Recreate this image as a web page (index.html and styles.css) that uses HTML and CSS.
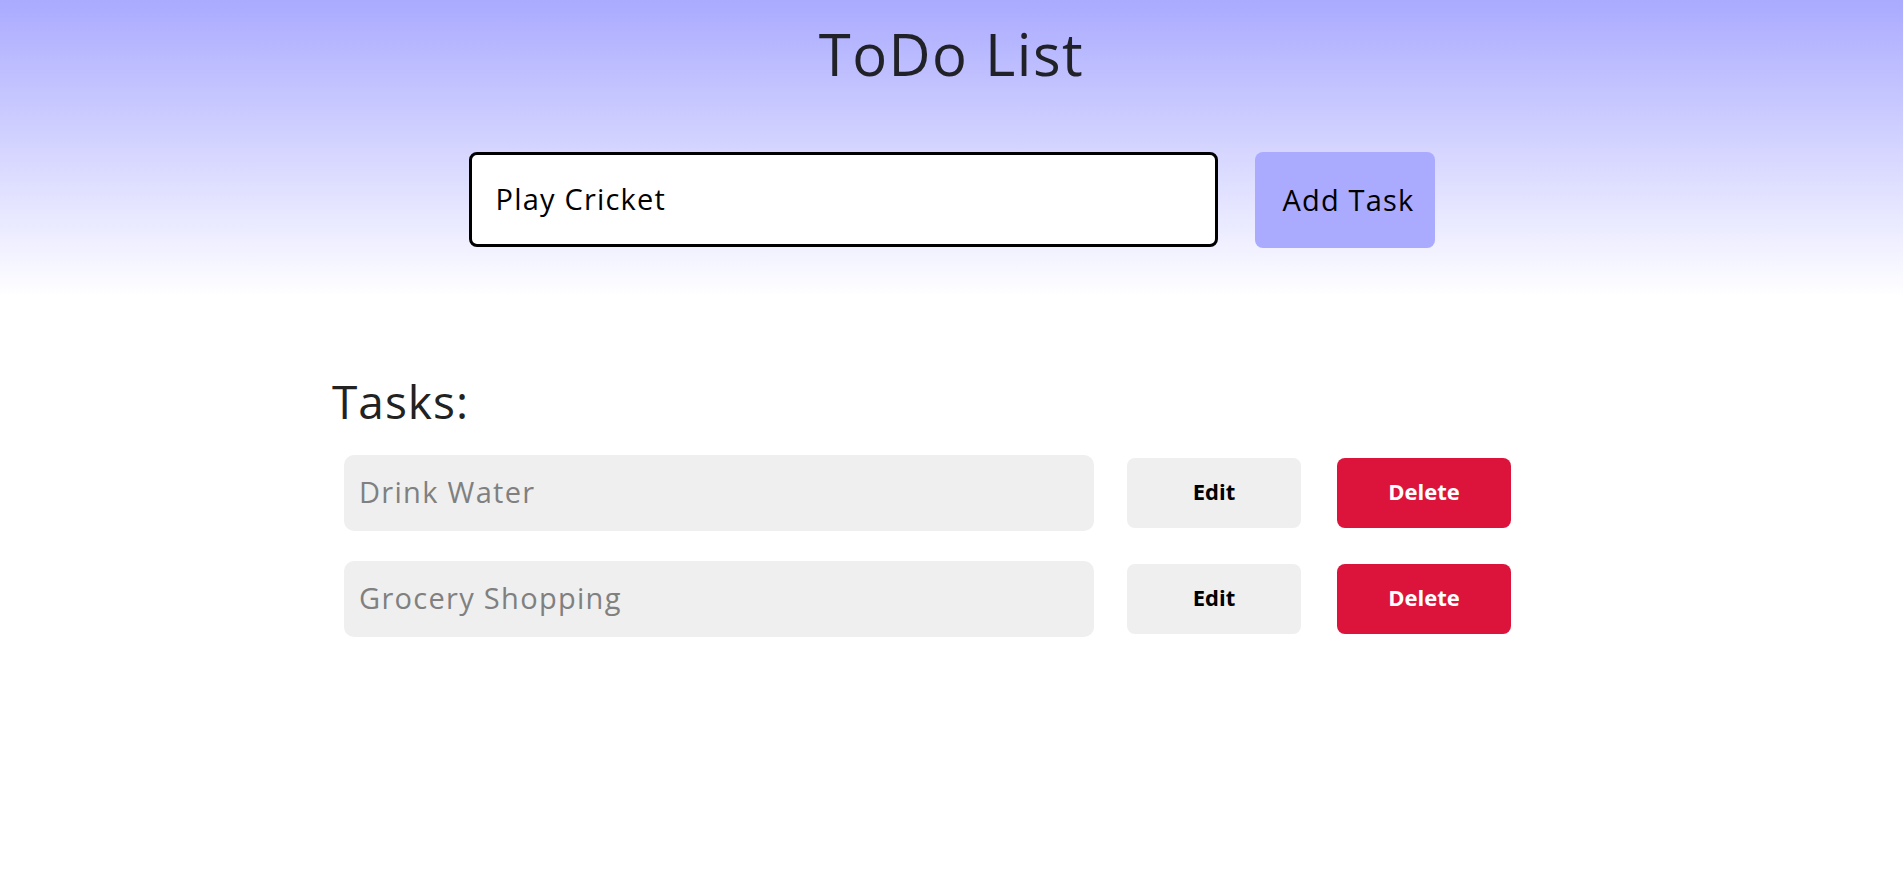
FILE: index.html
```html
<!DOCTYPE html>
<html lang="en">
<head>
<meta charset="utf-8">
<title>ToDo List</title>
<link rel="stylesheet" href="styles.css">
</head>
<body>
<header class="top">
  <h1 class="title">ToDo List</h1>
  <form class="add-form">
    <input class="add-input" type="text" value="Play Cricket">
    <button class="add-btn" type="button">Add Task</button>
  </form>
</header>
<main class="tasks">
  <h2 class="tasks-title">Tasks:</h2>
  <ul class="task-list">
    <li class="task">
      <input class="task-text" type="text" value="Drink Water" readonly>
      <button class="btn btn-edit" type="button">Edit</button>
      <button class="btn btn-delete" type="button">Delete</button>
    </li>
    <li class="task">
      <input class="task-text" type="text" value="Grocery Shopping" readonly>
      <button class="btn btn-edit" type="button">Edit</button>
      <button class="btn btn-delete" type="button">Delete</button>
    </li>
  </ul>
</main>
</body>
</html>
```
FILE: styles.css
```css
* { box-sizing: border-box; }
body {
  margin: 0;
  font-family: "Open Sans", "Liberation Sans", sans-serif;
  color: #222;
  background: #fff;
}
.top {
  height: 297px;
  background: linear-gradient(to bottom, #aaf 0%, #fff 100%);
  padding-top: 14px;
}
.title {
  margin: 0;
  text-align: center;
  font-size: 58px;
  font-weight: 400;
  line-height: 80px;
  letter-spacing: 1.5px;
  color: #212228;
}
.add-form {
  margin-top: 58px;
  display: flex;
  justify-content: center;
  gap: 37px;
}
.add-input {
  width: 749px;
  height: 95px;
  border: 3px solid #000;
  border-radius: 8px;
  background: #fff;
  padding: 0 24px 2px;
  font-family: inherit;
  font-size: 29px;
  letter-spacing: 1.2px;
  color: #000;
  outline: none;
}
.add-btn {
  width: 180px;
  height: 96px;
  border: none;
  border-radius: 8px;
  background: #aaf;
  font-family: inherit;
  font-size: 29px;
  letter-spacing: 1.2px;
  color: #000;
  padding: 0 0 2px 8px;
}
.tasks {
  width: 1243px;
  margin: 0 auto;
  padding-top: 74px;
}
.tasks-title {
  margin: 0;
  font-size: 46px;
  font-weight: 400;
  line-height: 60px;
  letter-spacing: 1px;
  color: #222;
  padding-left: 2px;
}
.task-list {
  list-style: none;
  margin: 24px 0 0;
  padding: 0 0 0 14px;
  display: flex;
  flex-direction: column;
  gap: 30px;
}
.task {
  display: flex;
  align-items: center;
}
.task-text {
  width: 750px;
  height: 76px;
  border: none;
  border-radius: 10px;
  background: #efefef;
  padding: 0 15px 4px;
  font-family: inherit;
  font-size: 29px;
  letter-spacing: 1.3px;
  color: #808080;
  outline: none;
}
.btn {
  width: 174px;
  height: 70px;
  border: none;
  border-radius: 8px;
  padding: 0 0 4px;
  font-family: inherit;
  font-size: 22px;
  font-weight: 700;
}
.btn-edit {
  margin-left: 33px;
  background: #efefef;
  color: #000;
}
.btn-delete {
  margin-left: 36px;
  background: #dc143c;
  color: #fff;
}
```
